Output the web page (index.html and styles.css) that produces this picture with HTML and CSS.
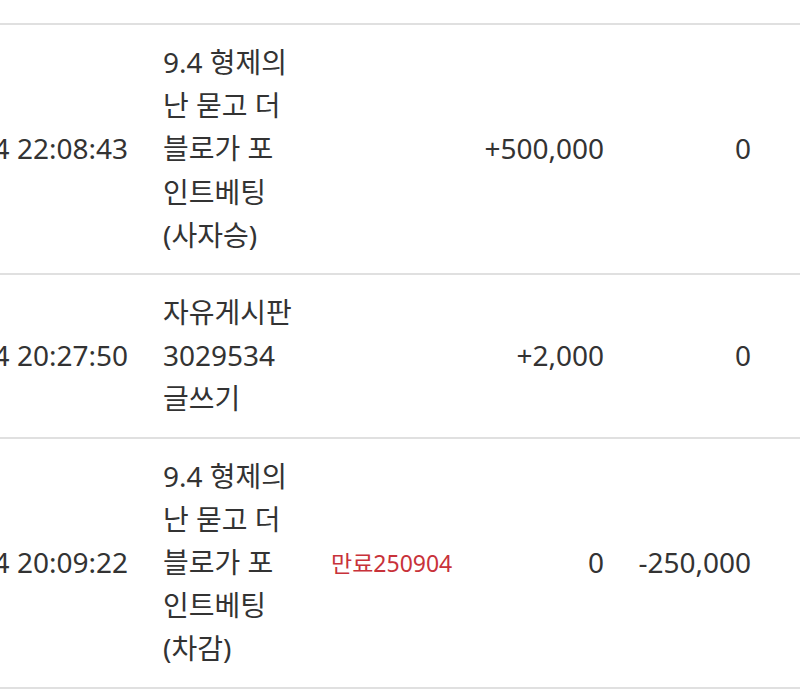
FILE: index.html
```html
<!DOCTYPE html>
<html lang="ko">
<head>
<meta charset="utf-8">
<link rel="stylesheet" href="styles.css">
</head>
<body>
<div class="list">
  <div class="row-tail"></div>
  <div class="row">
    <div class="cell date"><span>2025-09-04 22:08:43</span></div>
    <div class="cell desc">9.4 형제의 난 묻고 더 블로가 포인트베팅 (사자승)</div>
    <div class="cell memo"></div>
    <div class="cell num">+500,000</div>
    <div class="cell num">0</div>
  </div>
  <div class="row">
    <div class="cell date"><span>2025-09-04 20:27:50</span></div>
    <div class="cell desc">자유게시판 3029534 글쓰기</div>
    <div class="cell memo"></div>
    <div class="cell num">+2,000</div>
    <div class="cell num">0</div>
  </div>
  <div class="row">
    <div class="cell date"><span>2025-09-04 20:09:22</span></div>
    <div class="cell desc">9.4 형제의 난 묻고 더 블로가 포인트베팅 (차감)</div>
    <div class="cell memo"><span class="expire">만료250904</span></div>
    <div class="cell num">0</div>
    <div class="cell num">-250,000</div>
  </div>
</div>
</body>
</html>
```

FILE: styles.css
```css
html, body {
  margin: 0;
  padding: 0;
  background: #ffffff;
}
body {
  font-family: "Noto Sans", "Noto Sans CJK KR", sans-serif;
  color: #333333;
  font-size: 28px;
  line-height: 43.2px;
  overflow: hidden;
}
.list {
  width: 800px;
}
.row-tail {
  height: 23px;
  border-bottom: 2px solid #e0e0e0;
}
.row {
  display: grid;
  grid-template-columns: 128px 178px 165px 133px 147px;
  padding-right: 49px;
  align-items: center;
  border-bottom: 2px solid #e0e0e0;
  padding-top: 16px;
  padding-bottom: 16px;
}
.cell {
  min-width: 0;
}
.date {
  display: flex;
  justify-content: flex-end;
  white-space: nowrap;
}
.date span {
  flex: none;
}
.desc {
  padding-left: 35px;
  width: 136px;
}
.memo {
  padding-left: 25px;
}
.expire {
  color: #c8323a;
  font-size: 23px;
}
.num {
  text-align: right;
}
```
